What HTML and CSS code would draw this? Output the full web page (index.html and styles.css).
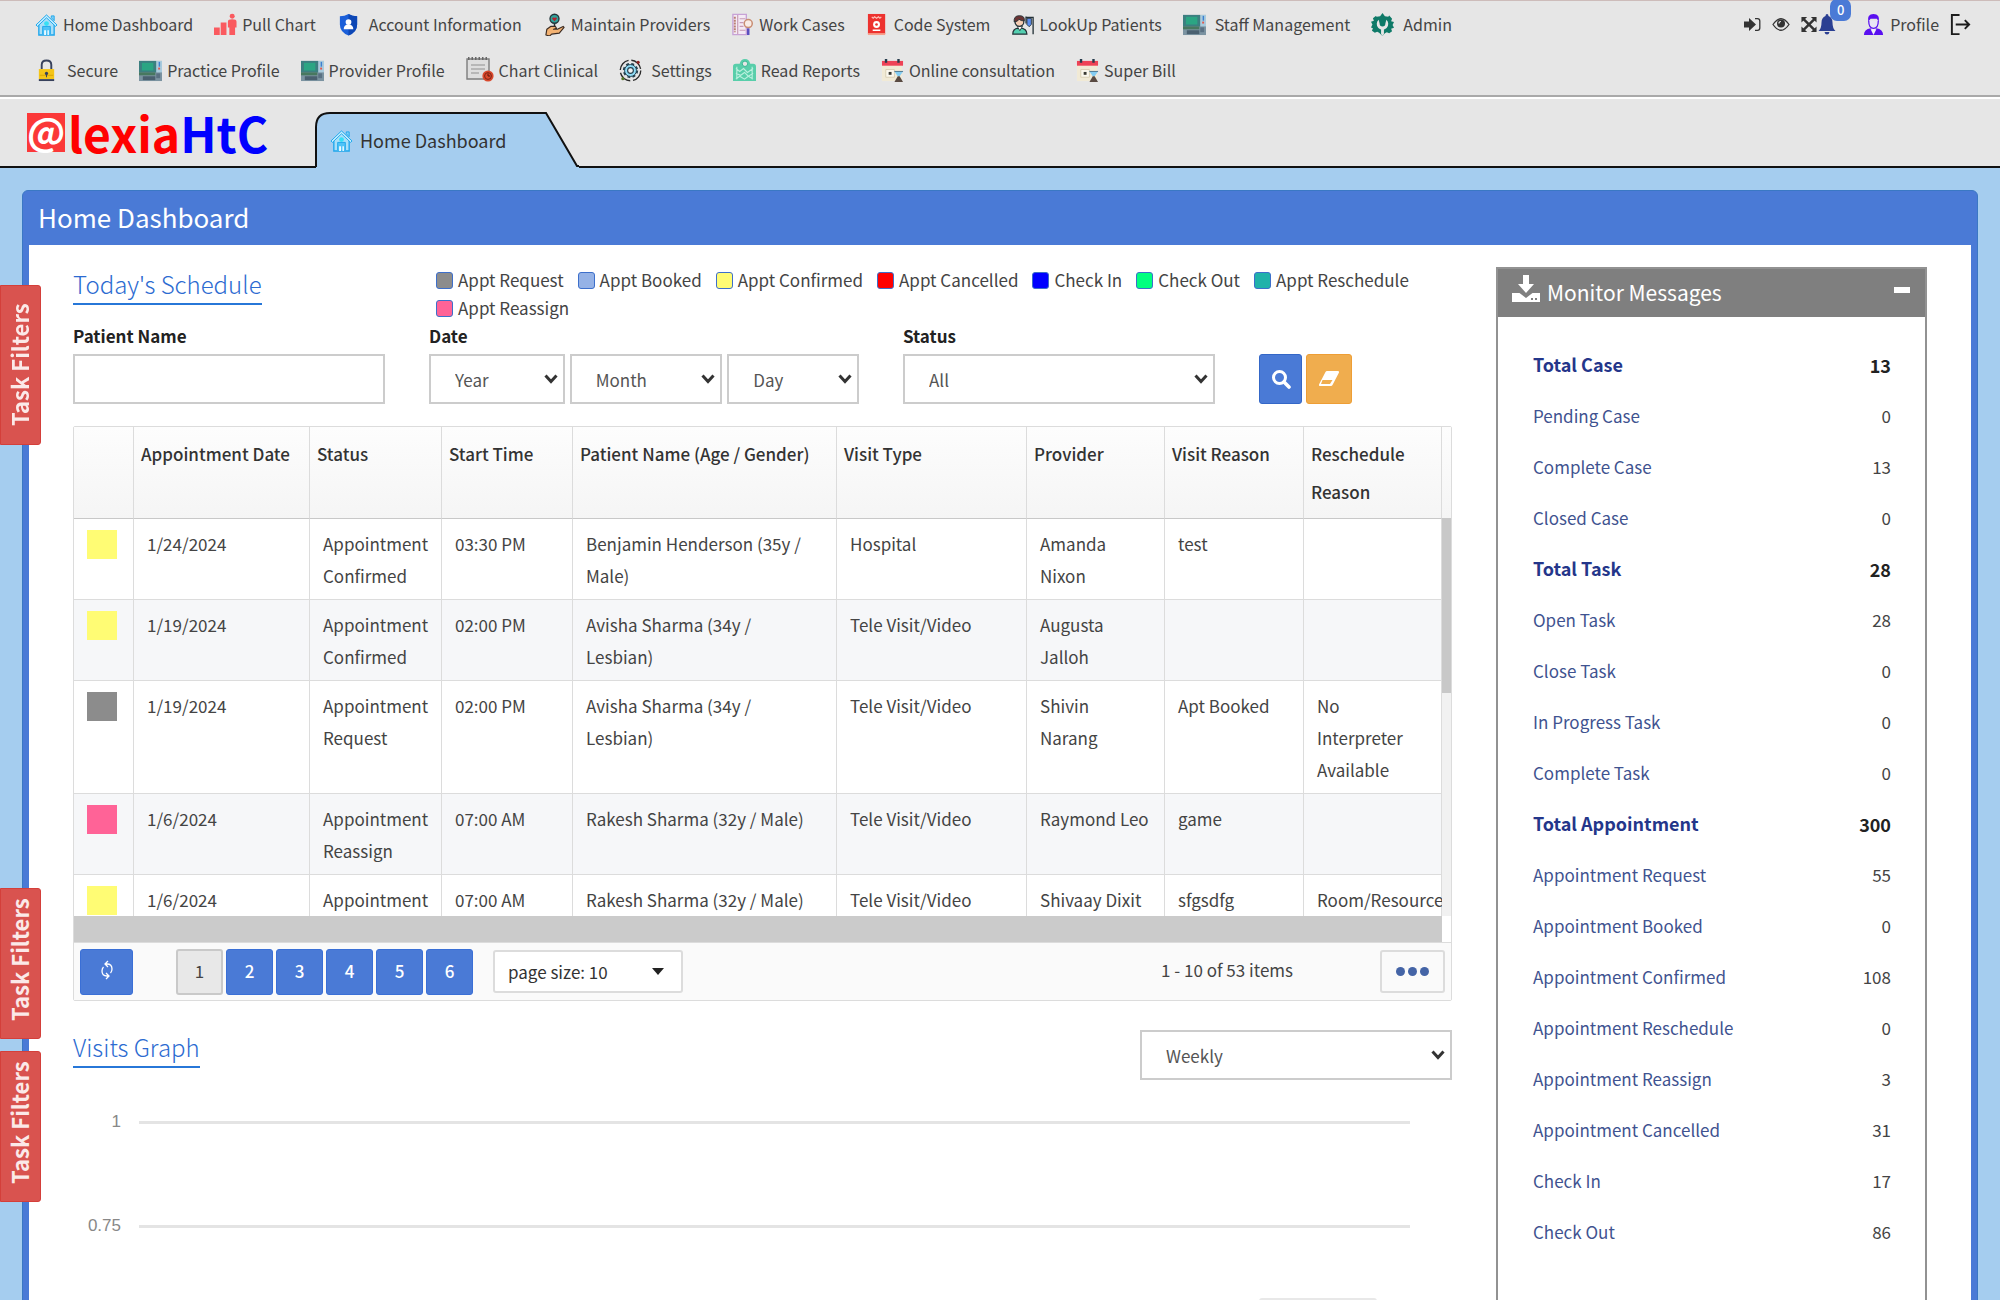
FILE: index.html
```html
<!DOCTYPE html>
<html lang="en">
<head>
<meta charset="utf-8">
<title>Home Dashboard</title>
<link rel="stylesheet" href="styles.css">
</head>
<body>
<svg class="sprite" aria-hidden="true">
  <symbol id="i-home" viewBox="0 0 24 24">
    <path d="M4 11v12h16V11l-8-8z" fill="#a9dff8" stroke="#1ea7ec" stroke-width="1.4"/>
    <path d="M17 3h3v5l-3-3z" fill="#7fd0f7" stroke="#1ea7ec"/>
    <path d="M1 12.500 12 2l11 10.500-1.500 1.500L12 5 2.500 14z" fill="#c9efff" stroke="#1ea7ec" stroke-linejoin="round"/>
    <path d="M8 22v-8h8v8" fill="#4fc3f7" stroke="#1ea7ec"/>
    <path d="M9.500 23v-5h2v5zm3.500 0v-5h1.500v5z" fill="#eafaff"/>
    <circle cx="12" cy="11" r="2.500" fill="#35e0f5"/>
  </symbol>
  <symbol id="i-chart" viewBox="0 0 24 24">
    <g fill="#fa5a5f"><path d="M0 15h6v8H0zM7 10h6v13H7z"/><circle cx="19" cy="3.500" r="2.600"/><path d="M14.500 9q0-2.500 4.500-2.500T23.500 9v6H22v8h-6v-8h-1.500z"/></g>
  </symbol>
  <symbol id="i-shield" viewBox="0 0 24 24">
    <path d="M12 1q4 2.500 9 2.500V12q0 8-9 11.500Q3 20 3 12V3.500Q8 3.500 12 1z" fill="#1b5fd9"/>
    <path d="M12 1q4 2.500 9 2.500V12q0 8-9 11.500z" fill="#0d47b5"/>
    <circle cx="12" cy="9.500" r="3" fill="#fff"/><path d="M7 17q0-5 5-5t5 5z" fill="#fff"/>
  </symbol>
  <symbol id="i-hand" viewBox="0 0 24 24">
    <circle cx="12" cy="6" r="4.700" fill="#2fa39b" stroke="#23343a" stroke-width="1.400"/>
    <path d="M12 8.500 9.500 6q0-2 2.500-1 2.500-1 2.500 1z" fill="#b3232f"/>
    <path d="M12 11v4" stroke="#23343a" stroke-width="1.600"/>
    <path d="M3 23l1-6 4-3h5l1 2-3 1h4l6-3 1 1-5 6-8 1-2 2z" fill="#f3b272" stroke="#3b2b22" stroke-width="1.200" stroke-linejoin="round"/>
  </symbol>
  <symbol id="i-cases" viewBox="0 0 24 24">
    <path d="M2 1.500h14v21H2z" fill="#f4eaf5" stroke="#c7a2d6" stroke-width="1.400"/>
    <path d="M4 4v16" stroke="#b98072" stroke-width="2" stroke-dasharray="2 1"/>
    <path d="M7 2v20M9 6h6M9 10h4M9 14h4M9 18h6" stroke="#c79ab5" stroke-width="1.200"/>
    <circle cx="18" cy="11" r="4.200" fill="#f8ece6" stroke="#c98e74" stroke-width="1.600"/>
    <path d="M18 16v7" stroke="#5a4fc0" stroke-width="2.600"/>
  </symbol>
  <symbol id="i-code" viewBox="0 0 24 24">
    <path d="M2 1h18v21H2z" fill="#ed322f"/><path d="M2 21h18v2H2z" fill="#f7a08c"/>
    <path d="M6 4l1.500 1.500L9 4l2 1.500L13 4l1.500 1.500L16 4" fill="none" stroke="#ffc1b8" stroke-width="1.200"/>
    <circle cx="11" cy="12" r="3.600" fill="#fff"/><circle cx="11" cy="12" r="1.400" fill="#ed322f"/><path d="M7 18h8" stroke="#fff" stroke-width="1.600"/>
  </symbol>
  <symbol id="i-patient" viewBox="0 0 26 24">
    <path d="M2 23q0-7 8-7t8 7z" fill="#54cfb0" stroke="#253238" stroke-width="1.400"/>
    <path d="M7 14l3 5 3-5z" fill="#fff" stroke="#253238"/>
    <circle cx="9.500" cy="9" r="5" fill="#f6cdb4" stroke="#253238" stroke-width="1.400"/>
    <path d="M3.500 9Q3 2 9.500 2T15 8q-4 0-6-2-1 3-5.500 3z" fill="#6b3434" stroke="#253238"/>
    <path d="M17 4h8v19M17 3v8" fill="none" stroke="#253238" stroke-width="1.500"/>
    <path d="M18 5h5v7l-2.500 2.500L18 12z" fill="#5d8ff0" stroke="#253238"/>
  </symbol>
  <symbol id="i-monitor" viewBox="0 0 24 24">
    <path d="M0 2h24v21H0z" fill="#7b93a1"/><path d="M0 2h18v12H0z" fill="#3c7f80"/><path d="M3 4h12v8H3z" fill="#2ba583"/>
    <path d="M18 2h6v12h-6z" fill="#a9cbdd"/><path d="M20.500 3H22v5h-1.500z" fill="#3c7fd0"/><path d="M20 9h2v2h-2z" fill="#e1574c"/>
    <path d="M0 14h17v3H0z" fill="#47785f"/><path d="M4 18h13v4H4z" fill="#4a6070"/><path d="M18 15h4v5h-4z" fill="#5a7183"/>
  </symbol>
  <symbol id="i-admin" viewBox="0 0 24 24">
    <path d="M9.500 3.500 12 0l2.500 3.500 3.500.5 1-1.500L22 6l-1 2.500 3 1-1.500 3 1.500 3-3 1 1 2.500-3 2-2.500-1-2 1L12 24l-3.500-3.500-2-1L4 20.500l-3-2L2 16l-2-1 1.500-3L0 9l3-1L2 5.500 5 3l1 1z" fill="#0f7a68"/>
    <path d="M8 7a6 6 0 1 0 8 0l-1 4q0 3-3 3t-3-3z" fill="#e6e6e6"/><path d="M12 5v7" stroke="#0f7a68" stroke-width="2.400"/><path d="M10.500 15h3v7L12 24l-1.500-2z" fill="#e6e6e6"/>
  </symbol>
  <symbol id="i-lock" viewBox="0 0 24 24">
    <path d="M7 11V6q0-4.500 5-4.500T17 6v5" fill="none" stroke="#37415c" stroke-width="2"/>
    <path d="M4 10.500h16V21H4z" fill="#f5c518"/><path d="M4 21h16v2H4z" fill="#37415c"/><path d="M5 17h14" stroke="#d9a400"/>
    <circle cx="12" cy="15" r="1.700" fill="#37415c"/><path d="M11.500 15h1v4h-1z" fill="#37415c"/>
  </symbol>
  <symbol id="i-clinical" viewBox="0 0 28 26">
    <path d="M1 2h22v20H1z" fill="#dedede" stroke="#7d7d7d" stroke-width="1.400"/>
    <path d="M2 1.500h21" stroke="#666" stroke-width="3" stroke-dasharray="1.500 2"/>
    <path d="M5 8h14M5 12h14M5 16h8" stroke="#aaa" stroke-width="1.400"/>
    <circle cx="22" cy="19" r="5.600" fill="#d9482b"/><circle cx="22" cy="19" r="3.400" fill="none" stroke="#7d2415"/><path d="M22 16.500V19h2" stroke="#5a150a" fill="none"/>
  </symbol>
  <symbol id="i-gear" viewBox="0 0 24 24">
    <circle cx="12" cy="12" r="10.700" fill="none" stroke="#2a2a2a" stroke-width="1.400" stroke-dasharray="14 3"/>
    <circle cx="12" cy="12" r="6.500" fill="#8fdcf6" stroke="#26414e" stroke-width="3" stroke-dasharray="2.800 2.300"/>
    <circle cx="12" cy="12" r="6.200" fill="#8fdcf6" stroke="#26414e"/><circle cx="12" cy="12" r="3" fill="#f1f1f1" stroke="#26414e" stroke-width="1.200"/>
    <circle cx="20" cy="3.500" r="1.600" fill="#8b2222"/><circle cx="4" cy="20.500" r="1.600" fill="#55782a"/>
  </symbol>
  <symbol id="i-report" viewBox="0 0 24 24">
    <path d="M0 8q0-3 3-3h4q1-5 5.500-5T18 5h3q3 0 3 3v15H0z" fill="#58ceaa"/><circle cx="12.500" cy="5" r="2.800" fill="#e6e6e6" stroke="#34b791"/>
    <path d="M3 10l4 3 4-3 4 4 6-4M3 15l5 2 4-3 4 4 5-3M3 21l4-3 5 3 4-3 5 3M4 8v13M20 8v13" fill="none" stroke="#b9f0de" stroke-width="1.200"/>
  </symbol>
  <symbol id="i-calendar" viewBox="0 0 24 24">
    <path d="M1 6h21v17H1z" fill="#f1ead6"/><path d="M1 2h22v5H1z" fill="#ee4256"/>
    <path d="M4 0h2.500v4H4zm13 0h2.500v4H17z" fill="#263b4c"/><path d="M5 11h9v8H5z" fill="#fbf8ee" stroke="#d8cfb4"/>
    <path d="M8 13.500h3v3H8z" fill="#3a3a34"/><path d="M14 13h9l-3.500 5h-2z" fill="#85cdf2"/><path d="M17.500 18h2l3.500 6h-9z" fill="#594a42"/><path d="M14 13h9" stroke="#4d7790"/>
  </symbol>
  <symbol id="i-signin" viewBox="0 0 18 16">
    <path d="M0 5h5V1.500l7 6.500-7 6.500V11H0z" fill="#333"/><path d="M11 2.200h2.500q2.300 0 2.300 2.300v7q0 2.300-2.300 2.300H11" fill="none" stroke="#333" stroke-width="1.300"/>
  </symbol>
  <symbol id="i-eye" viewBox="0 0 18 16">
    <path d="M1 8q8-11.500 16 0-8 11.500-16 0z" fill="none" stroke="#333" stroke-width="1.300"/><circle cx="9" cy="7" r="4" fill="#333"/><path d="M7 7q0-2 2-2" fill="none" stroke="#e6e6e6" stroke-width="1.200"/>
  </symbol>
  <symbol id="i-expand" viewBox="0 0 18 18">
    <path d="M3 3l12 12M15 3L3 15" stroke="#333" stroke-width="2.600"/><path d="M1 1h6L1 7zm16 0v6l-6-6zM1 17v-6l6 6zm16 0h-6l6-6z" fill="#333"/>
  </symbol>
  <symbol id="i-bell" viewBox="0 0 18 22">
    <path d="M9 1q1.500 0 1.500 2 4 1.500 4 6.500 0 6 3 8.500H.5q3-2.500 3-8.500 0-5 4-6.500Q7.500 1 9 1z" fill="#2b3f92"/><path d="M6.500 19h5Q11 21.500 9 21.500T6.500 19z" fill="#2b3f92"/>
  </symbol>
  <symbol id="i-person" viewBox="0 0 22 24">
    <path d="M5.500 9Q4 1 11 1t5.500 8l-2-3H8z" fill="#5a10f0"/><path d="M6 8q0 8 5 8t5-8" fill="#e9e6f5" stroke="#5a10f0" stroke-width="1.300"/>
    <path d="M1 23q0-6 7-7l3 4 3-4q7 1 7 7z" fill="#5a10f0"/><path d="M8 17l3 6 3-6z" fill="#f3f0fa"/>
  </symbol>
  <symbol id="i-logout" viewBox="0 0 22 24">
    <path d="M10 2H2v20h8M6 12h14M15.500 7.500 20 12l-4.500 4.500" fill="none" stroke="#1c1c1c" stroke-width="2"/>
  </symbol>
</svg>

<div class="app">
  <nav class="topnav" aria-label="Main">
    <ul class="menu">
      <li><a href="#"><svg class="icon"><use href="#i-home"/></svg>Home Dashboard</a></li>
      <li><a href="#"><svg class="icon"><use href="#i-chart"/></svg>Pull Chart</a></li>
      <li><a href="#"><svg class="icon wide"><use href="#i-shield"/></svg>Account Information</a></li>
      <li><a href="#"><svg class="icon"><use href="#i-hand"/></svg>Maintain Providers</a></li>
      <li><a href="#"><svg class="icon"><use href="#i-cases"/></svg>Work Cases</a></li>
      <li><a href="#"><svg class="icon"><use href="#i-code"/></svg>Code System</a></li>
      <li><a href="#"><svg class="icon"><use href="#i-patient"/></svg>LookUp Patients</a></li>
      <li><a href="#"><svg class="icon wide"><use href="#i-monitor"/></svg>Staff Management</a></li>
      <li><a href="#"><svg class="icon wide"><use href="#i-admin"/></svg>Admin</a></li>
    </ul>
    <div class="tools">
      <a href="#" aria-label="Sign in"><svg class="tool"><use href="#i-signin"/></svg></a>
      <a href="#" aria-label="View"><svg class="tool"><use href="#i-eye"/></svg></a>
      <span class="alerts">
        <a href="#" aria-label="Full screen"><svg class="tool"><use href="#i-expand"/></svg></a>
        <a href="#" class="bell" aria-label="Notifications"><svg class="bell-icon"><use href="#i-bell"/></svg><span class="badge">0</span></a>
      </span>
      <a href="#" class="profile"><svg class="icon"><use href="#i-person"/></svg>Profile</a>
      <a href="#" aria-label="Log out"><svg class="icon"><use href="#i-logout"/></svg></a>
    </div>
    <ul class="menu second">
      <li><a href="#"><svg class="icon wide"><use href="#i-lock"/></svg>Secure</a></li>
      <li><a href="#"><svg class="icon"><use href="#i-monitor"/></svg>Practice Profile</a></li>
      <li><a href="#"><svg class="icon"><use href="#i-monitor"/></svg>Provider Profile</a></li>
      <li><a href="#"><svg class="icon large"><use href="#i-clinical"/></svg>Chart Clinical</a></li>
      <li><a href="#"><svg class="icon wide"><use href="#i-gear"/></svg>Settings</a></li>
      <li><a href="#"><svg class="icon"><use href="#i-report"/></svg>Read Reports</a></li>
      <li><a href="#"><svg class="icon"><use href="#i-calendar"/></svg>Online consultation</a></li>
      <li><a href="#"><svg class="icon"><use href="#i-calendar"/></svg>Super Bill</a></li>
    </ul>
  </nav>

  <header class="tabs">
    <div class="logo"><span class="logo-at">@</span><span class="logo-red">lexia</span><span class="logo-blue">HtC</span></div>
    <a href="#" class="tab">
      <svg class="tab-shape" viewBox="0 0 264 56" aria-hidden="true"><path d="M1 56V15Q1 1 15 1H231L262 54H264V56z" fill="#a5cdef"/><path d="M1 55V15Q1 1 15 1H231L262 54H264" fill="none" stroke="#111" stroke-width="2"/></svg>
      <span class="tab-label"><svg class="icon"><use href="#i-home"/></svg>Home Dashboard</span>
    </a>
  </header>

  <main class="stage">
    <section class="panel">
      <h1 class="panel-title">Home Dashboard</h1>
      <div class="panel-body">
        <div class="content">
          <div class="schedule-head">
            <h2 class="section-title"><span>Today's Schedule</span></h2>
            <ul class="legend">
              <li><i class="swatch c-request"></i>Appt Request</li>
              <li><i class="swatch c-booked"></i>Appt Booked</li>
              <li><i class="swatch c-confirmed"></i>Appt Confirmed</li>
              <li><i class="swatch c-cancelled"></i>Appt Cancelled</li>
              <li><i class="swatch c-in"></i>Check In</li>
              <li><i class="swatch c-out"></i>Check Out</li>
              <li><i class="swatch c-reschedule"></i>Appt Reschedule</li>
              <li><i class="swatch c-reassign"></i>Appt Reassign</li>
            </ul>
          </div>

          <form class="filters">
            <div class="field">
              <label for="patient">Patient Name</label>
              <input id="patient" type="text" class="control">
            </div>
            <div class="field date">
              <label for="year">Date</label>
              <div class="date-row">
                <select id="year" class="control year"><option>Year</option></select>
                <select class="control month" aria-label="Month"><option>Month</option></select>
                <select class="control day" aria-label="Day"><option>Day</option></select>
              </div>
            </div>
            <div class="field">
              <label for="status">Status</label>
              <select id="status" class="control"><option>All</option></select>
            </div>
            <div class="actions">
              <button type="button" class="btn search" aria-label="Search"><svg viewBox="0 0 20 20"><circle cx="8.500" cy="8.500" r="6" fill="none" stroke="#fff" stroke-width="3"/><path d="M13 13l5 5" stroke="#fff" stroke-width="3.600" stroke-linecap="round"/></svg></button>
              <button type="button" class="btn clear" aria-label="Clear"><svg viewBox="0 0 22 20"><path d="M9 2h11q1.500 0 1 1.500L14.500 16q-.5 1-1.500 1H2Q.5 17 1 15.500L7.500 3q.5-1 1.500-1zM4.500 11 3 15h9l2.500-4z" fill="#fff" fill-rule="evenodd"/></svg></button>
            </div>
          </form>

          <div class="grid">
            <div class="grid-view">
              <div class="grid-scroll">
                <table>
                  <colgroup><col class="w-mark"><col class="w-appt"><col class="w-status"><col class="w-start"><col class="w-name"><col class="w-type"><col class="w-prov"><col class="w-reason"><col class="w-resch"></colgroup>
                  <thead>
                    <tr><th></th><th>Appointment Date</th><th>Status</th><th>Start Time</th><th>Patient Name (Age / Gender)</th><th>Visit Type</th><th>Provider</th><th>Visit Reason</th><th>Reschedule Reason</th></tr>
                  </thead>
                  <tbody>
                    <tr><td><i class="mark c-confirmed"></i></td><td>1/24/2024</td><td>Appointment Confirmed</td><td>03:30 PM</td><td>Benjamin Henderson (35y / Male)</td><td>Hospital</td><td>Amanda<br>Nixon</td><td>test</td><td></td></tr>
                    <tr><td><i class="mark c-confirmed"></i></td><td>1/19/2024</td><td>Appointment Confirmed</td><td>02:00 PM</td><td>Avisha Sharma (34y / Lesbian)</td><td>Tele Visit/Video</td><td>Augusta<br>Jalloh</td><td></td><td></td></tr>
                    <tr><td><i class="mark c-request"></i></td><td>1/19/2024</td><td>Appointment Request</td><td>02:00 PM</td><td>Avisha Sharma (34y / Lesbian)</td><td>Tele Visit/Video</td><td>Shivin<br>Narang</td><td>Apt Booked</td><td>No Interpreter Available</td></tr>
                    <tr><td><i class="mark c-reassign"></i></td><td>1/6/2024</td><td>Appointment Reassign</td><td>07:00 AM</td><td>Rakesh Sharma (32y / Male)</td><td>Tele Visit/Video</td><td>Raymond Leo</td><td>game</td><td></td></tr>
                    <tr><td><i class="mark c-confirmed"></i></td><td>1/6/2024</td><td>Appointment Confirmed</td><td>07:00 AM</td><td>Rakesh Sharma (32y / Male)</td><td>Tele Visit/Video</td><td>Shivaay Dixit</td><td>sfgsdfg</td><td>Room/Resource</td></tr>
                  </tbody>
                </table>
              </div>
              <div class="vbar"><div class="vbar-head"></div><div class="vbar-thumb"></div></div>
            </div>
            <div class="hbar"></div>
            <div class="pager">
              <button type="button" class="page refresh" aria-label="Refresh"><svg viewBox="0 0 16 20"><path d="M9 1 6 4l3 3M6 4h2q5 0 5 5 0 2.500-1.500 4M7 19l3-3-3-3m3 3H8q-5 0-5-5 0-2.500 1.500-4" fill="none" stroke="#fff" stroke-width="1.300"/></svg></button>
              <div class="pages">
                <button type="button" class="page current">1</button>
                <button type="button" class="page">2</button>
                <button type="button" class="page">3</button>
                <button type="button" class="page">4</button>
                <button type="button" class="page">5</button>
                <button type="button" class="page">6</button>
              </div>
              <select class="page-size" aria-label="Page size"><option>page size: 10</option></select>
              <span class="count">1 - 10 of 53 items</span>
              <button type="button" class="more" aria-label="More"><i></i><i></i><i></i></button>
            </div>
          </div>

          <div class="graph-head">
            <h2 class="section-title"><span>Visits Graph</span></h2>
            <select class="control period" aria-label="Period"><option>Weekly</option></select>
          </div>
          <div class="chart">
            <div class="tick"><span>1</span><i></i></div>
            <div class="tick"><span>0.75</span><i></i></div>
            <div class="chart-tip"></div>
          </div>
        </div>

        <aside class="monitor">
          <h2 class="monitor-head">
            <svg class="inbox" viewBox="0 0 28 28"><path d="M11 0h6v9h5l-8 9-8-9h5z" fill="#fff"/><path d="M0 18h7.500l6.500 5 6.500-5H28v9H0z" fill="#fff"/><path d="M19 23h2v2h-2zm4 0h2v2h-2z" fill="#7f7f7f"/></svg>
            <span>Monitor Messages</span>
            <button type="button" class="collapse" aria-label="Collapse"></button>
          </h2>
          <table class="totals">
            <tr class="total"><th>Total Case</th><td>13</td></tr>
            <tr><th><a href="#">Pending Case</a></th><td>0</td></tr>
            <tr><th><a href="#">Complete Case</a></th><td>13</td></tr>
            <tr><th><a href="#">Closed Case</a></th><td>0</td></tr>
            <tr class="total"><th>Total Task</th><td>28</td></tr>
            <tr><th><a href="#">Open Task</a></th><td>28</td></tr>
            <tr><th><a href="#">Close Task</a></th><td>0</td></tr>
            <tr><th><a href="#">In Progress Task</a></th><td>0</td></tr>
            <tr><th><a href="#">Complete Task</a></th><td>0</td></tr>
            <tr class="total"><th>Total Appointment</th><td>300</td></tr>
            <tr><th><a href="#">Appointment Request</a></th><td>55</td></tr>
            <tr><th><a href="#">Appointment Booked</a></th><td>0</td></tr>
            <tr><th><a href="#">Appointment Confirmed</a></th><td>108</td></tr>
            <tr><th><a href="#">Appointment Reschedule</a></th><td>0</td></tr>
            <tr><th><a href="#">Appointment Reassign</a></th><td>3</td></tr>
            <tr><th><a href="#">Appointment Cancelled</a></th><td>31</td></tr>
            <tr><th><a href="#">Check In</a></th><td>17</td></tr>
            <tr><th><a href="#">Check Out</a></th><td>86</td></tr>
          </table>
        </aside>
      </div>
    </section>
  </main>
</div>

<button type="button" class="side-tab first">Task Filters</button>
<button type="button" class="side-tab second-tab">Task Filters</button>
<button type="button" class="side-tab third">Task Filters</button>
</body>
</html>
```
FILE: styles.css
```css
:root {
  --blue: #4a7ad6;
  --sky: #a5cdef;
  --line: #dcdcdc;
}
* { box-sizing: border-box; }
body, button, input, select {
  font-family: "Noto Sans CJK SC", "Noto Sans", sans-serif;
  font-size: 17px;
  color: #444;
}
body { margin: 0; background: var(--sky); line-height: 28px; }
ul, h1, h2 { margin: 0; padding: 0; list-style: none; font-weight: 400; }
a { color: inherit; text-decoration: none; }
svg { display: block; flex: none; }
button { cursor: pointer; }
.sprite { position: absolute; width: 0; height: 0; }

.app { display: flex; flex-direction: column; height: 100vh; overflow: hidden; }

/* top navigation */
.topnav {
  display: grid;
  grid-template-columns: 1fr auto;
  grid-auto-rows: 46px;
  flex: none;
  padding: 0 28px 2px 35px;
  background: #e6e6e6;
  border-top: 1px solid #cdbcba;
  border-bottom: 2px solid #a9a9a9;
  font-size: 16px;
}
.menu { display: flex; align-items: center; gap: 21px; }
.menu a, .profile { display: flex; align-items: center; gap: 5px; white-space: nowrap; }
.icon { width: 23px; height: 23px; }
.icon.wide { margin-right: 4px; }
.icon.large { width: 28px; height: 26px; }
.second { grid-column: 1 / -1; }
.tools { display: flex; align-items: center; gap: 10px; }
.tool { width: 18px; height: 17px; }
.alerts { display: flex; align-items: center; }
.bell { position: relative; margin-right: 16px; }
.bell-icon { width: 18px; height: 22px; }
.badge {
  position: absolute;
  left: 12px;
  top: -14px;
  min-width: 21px;
  height: 22px;
  border-radius: 7px;
  background: var(--blue);
  color: #fff;
  font-size: 13px;
  font-weight: 500;
  line-height: 21px;
  text-align: center;
}

/* logo and page tab */
.tabs {
  display: flex;
  align-items: flex-end;
  flex: none;
  height: 71px;
  padding-left: 27px;
  background: #e6e6e6;
  border-top: 2px solid #fff;
  box-shadow: inset 0 -2px #111;
}
.logo {
  display: flex;
  align-items: center;
  width: 288px;
  height: 56px;
  padding-bottom: 16px;
  font-size: 48px;
  font-weight: 700;
  line-height: 40px;
}
.logo-at {
  width: 38px;
  height: 39px;
  margin-right: 3px;
  background: #fb3838;
  color: #fff;
  font-size: 38px;
  line-height: 34px;
  text-align: center;
}
.logo-red { color: #f00; }
.logo-blue { color: #00f; }
.tab { display: grid; width: 264px; height: 56px; color: #333; font-size: 18px; }
.tab > * { grid-area: 1 / 1; }
.tab-shape { width: 264px; height: 56px; }
.tab-label { display: flex; align-items: center; gap: 7px; padding-left: 15px; z-index: 1; }

/* panel */
.stage { flex: 1; min-height: 0; padding: 22px 22px 0; overflow: hidden; }
.panel {
  min-height: 100%;
  border: 1px solid #3a78c4;
  border-radius: 6px 6px 0 0;
  background: var(--blue);
  padding: 0 6px;
}
.panel-title { padding: 0 0 2px 9px; color: #fff; font-size: 26px; line-height: 52px; }
.panel-body {
  display: grid;
  grid-template-columns: 1fr 431px;
  gap: 44px;
  min-height: 1200px;
  padding: 22px 44px 0;
  background: #fff;
}
.content { min-width: 0; }

.schedule-head { display: flex; height: 55px; }
.section-title { width: 363px; color: #2c6bd1; font-size: 24px; font-weight: 300; line-height: 34px; }
.section-title span { display: inline-block; padding-bottom: 2px; border-bottom: 2px solid #2777d8; }
.legend { display: flex; flex: 1; flex-wrap: wrap; column-gap: 14px; align-content: flex-start; margin-top: -1px; }
.legend li { display: flex; align-items: center; gap: 5px; line-height: 28px; }
.swatch { width: 17px; height: 17px; border: 1px solid #3d6fcb; border-radius: 3px; }
.c-request { background: #8c8c8c; }
.c-booked { background: #95b2e6; }
.c-confirmed { background: #fffc74; }
.c-cancelled { background: #f00; }
.c-in { background: #00f; }
.c-out { background: #00ff7f; }
.c-reschedule { background: #20b2aa; }
.c-reassign { background: #ff6397; }

.filters { display: flex; align-items: flex-end; gap: 44px; }
.field { display: flex; flex-direction: column; flex: 0 1 312px; }
.field.date { flex-basis: 430px; }
.field label { margin-bottom: 5px; color: #222; font-weight: 700; line-height: 27px; }
.date-row { display: flex; gap: 5px; }
.control {
  width: 100%;
  height: 50px;
  border: 2px solid #ccc;
  border-radius: 0;
  background: #fff;
  color: #555;
  font-size: 17px;
}
select.control {
  appearance: none;
  padding: 0 24px;
  background: #fff url("data:image/svg+xml,%3Csvg xmlns='http://www.w3.org/2000/svg' viewBox='0 0 14 10'%3E%3Cpath d='M1.500 1.500 7 7.500 12.500 1.500' fill='none' stroke='%23333' stroke-width='3'/%3E%3C/svg%3E") no-repeat right 5px center / 14px 10px;
}
select.year { flex: 1 1 136px; padding-right: 20px; }
select.month { flex: 1 1 153px; padding-right: 20px; }
select.day { flex: 1 1 132px; padding-right: 20px; }
.actions { display: flex; gap: 4px; }
.btn {
  display: flex;
  align-items: center;
  justify-content: center;
  width: 43px;
  height: 50px;
  border: 1px solid #3467c7;
  border-radius: 3px;
  background: var(--blue);
}
.btn svg { width: 22px; height: 20px; }
.btn.clear { width: 46px; border-color: #ee9e35; background: #f0ad4e; }

/* appointment grid */
.grid { margin-top: 22px; border: 1px solid var(--line); border-radius: 2px; }
.grid-view { display: grid; grid-template-columns: 1fr 9px; height: 489px; }
.grid-scroll { overflow: hidden; }
table { width: 100%; border-collapse: separate; border-spacing: 0; table-layout: fixed; }
.w-mark { width: 60px; }
.w-appt { width: 176px; }
.w-status { width: 132px; }
.w-start { width: 131px; }
.w-name { width: 264px; }
.w-type { width: 190px; }
.w-prov { width: 138px; }
.w-reason { width: 139px; }
.w-resch { width: 138px; }
.grid th, .grid td {
  border-right: 1px solid var(--line);
  border-bottom: 1px solid var(--line);
  text-align: left;
  vertical-align: top;
}
.grid th {
  padding: 8px 7px 7px;
  border-bottom-color: #c8c8c8;
  color: #333;
  font-size: 17px;
  font-weight: 500;
  line-height: 38px;
}
.grid thead, .vbar-head { background: linear-gradient(#fdfdfd, #f5f5f5); }
.grid td { padding: 9px 10px 7px 13px; line-height: 32px; }
.grid td:nth-child(5), .grid td:nth-child(9) { padding-right: 17px; }
.grid tbody tr:nth-child(even) { background: #f6f7f9; }
.mark { display: block; width: 30px; height: 29px; margin-top: 2px; }
.vbar { display: flex; flex-direction: column; background: #f1f1f1; }
.vbar-head { height: 92px; border-bottom: 1px solid #c8c8c8; }
.vbar-thumb { height: 174px; background: #c8c8c8; }
.hbar { height: 26px; margin-right: 9px; background: #cbcbcb; }
.pager {
  display: flex;
  align-items: center;
  height: 58px;
  padding: 0 6px;
  border-top: 1px solid var(--line);
  background: #fafafa;
}
.page {
  width: 47px;
  height: 46px;
  padding: 0 0 3px;
  border: 1px solid #3a6fd6;
  border-radius: 3px;
  background: var(--blue);
  color: #fff;
  font-weight: 500;
}
.page.current { border: 2px solid #c9c9c9; background: #e8e8e8; color: #444; font-weight: 400; }
.refresh { display: flex; align-items: center; justify-content: center; width: 53px; }
.refresh svg { width: 16px; height: 20px; }
.pages { display: flex; gap: 3px; margin: 0 20px 0 43px; }
.page-size {
  appearance: none;
  width: 190px;
  height: 43px;
  padding: 0 13px;
  border: 2px solid var(--line);
  border-radius: 3px;
  color: #333;
  background: #fff url("data:image/svg+xml,%3Csvg xmlns='http://www.w3.org/2000/svg' viewBox='0 0 12 7'%3E%3Cpath d='M0 0h12L6 7z' fill='%23222'/%3E%3C/svg%3E") no-repeat right 17px center / 12px 7px;
}
.count { margin-left: auto; margin-right: 87px; padding-bottom: 4px; }
.more {
  display: flex;
  align-items: center;
  justify-content: center;
  gap: 3px;
  width: 65px;
  height: 43px;
  border: 2px solid var(--line);
  border-radius: 3px;
  background: #fafafa;
}
.more i { width: 9px; height: 9px; border-radius: 50%; background: #4464a6; }

/* visits graph */
.graph-head { display: flex; justify-content: space-between; margin-top: 29px; }
.period { width: 312px; }
.chart { position: relative; height: 400px; padding: 28px 42px 0 0; }
.tick { display: flex; align-items: center; gap: 18px; height: 28px; margin-bottom: 76px; }
.tick span { width: 48px; color: #888; font-family: "Liberation Sans", sans-serif; font-size: 17px; text-align: right; }
.tick i { flex: 1; height: 3px; background: #e4e4e4; }
.chart-tip { position: absolute; right: 75px; top: 218px; width: 118px; height: 60px; border-radius: 3px; background: #e8e8e8; }

/* monitor */
.monitor { border: 2px solid #929292; }
.monitor-head {
  display: flex;
  align-items: center;
  gap: 7px;
  height: 48px;
  padding: 0 15px 2px 14px;
  background: #7f7f7f;
  color: #fff;
  font-size: 21px;
}
.inbox { width: 28px; height: 28px; margin-bottom: 6px; }
.collapse { width: 16px; height: 6px; margin-left: auto; margin-bottom: 4px; padding: 0; border: 0; background: #fff; }
.totals { margin-top: 22px; padding: 0 34px 0 35px; table-layout: auto; }
.totals th { padding: 0; color: #3f5390; font-weight: 400; text-align: left; line-height: 51px; }
.totals td { padding: 0; text-align: right; }
.totals .total th, .totals .total td { font-weight: 700; font-size: 18px; color: #222; }
.totals .total th { color: #24368a; }

/* side tabs */
.side-tab {
  position: fixed;
  left: 0;
  width: 41px;
  height: 151px;
  padding: 8px 0 0 3px;
  border: 1px solid #d43f3a;
  border-radius: 3px 0 0 3px;
  background: #d9534f;
  color: #fbe9e8;
  font-size: 22px;
  font-weight: 700;
  line-height: 32px;
  writing-mode: vertical-rl;
  transform: rotate(180deg);
}
.first { top: 285px; height: 160px; padding-top: 0; }
.second-tab { top: 888px; }
.third { top: 1051px; }
```
